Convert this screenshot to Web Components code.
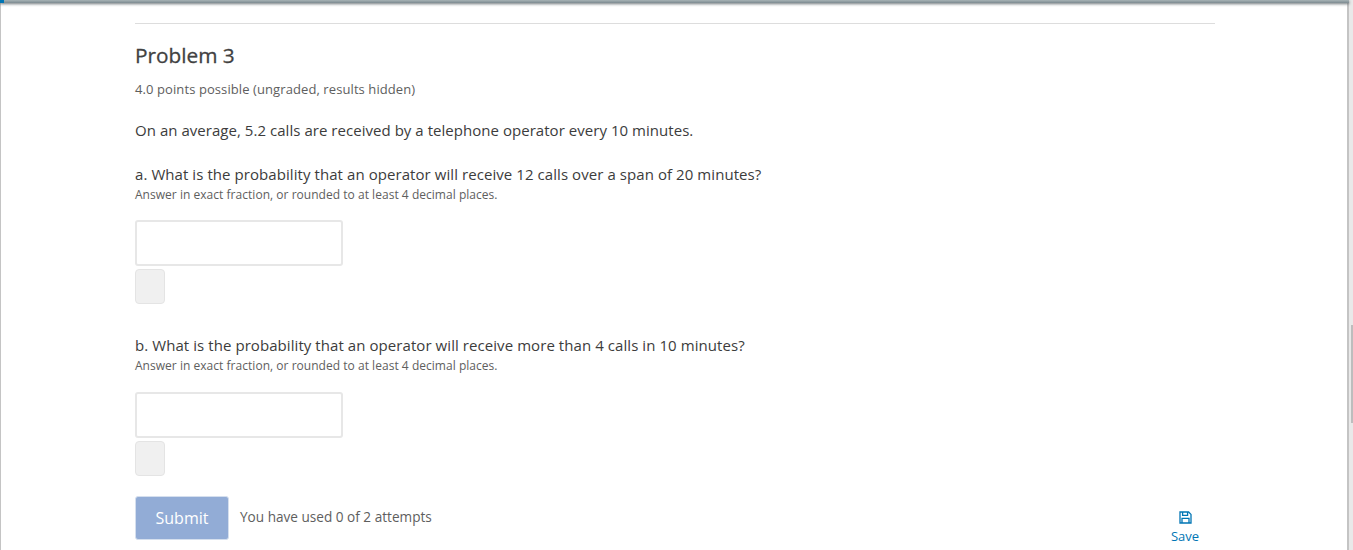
<!DOCTYPE html>
<html>
<head>
<meta charset="utf-8">
<title>Problem 3</title>
<style>
  html, body { margin: 0; height: 100%; overflow: hidden; background: #efefef; }
  body { font-family: "Open Sans", "Liberation Sans", sans-serif; }
</style>
</head>
<body>
<page-frame>
  <problem-block heading="Problem 3" points="4.0 points possible (ungraded, results hidden)">
    <p slot="intro">On an average, 5.2 calls are received by a telephone operator every 10 minutes.</p>
    <answer-part question="a. What is the probability that an operator will receive 12 calls over a span of 20 minutes?" hint="Answer in exact fraction, or rounded to at least 4 decimal places."></answer-part>
    <answer-part class="second" question="b. What is the probability that an operator will receive more than 4 calls in 10 minutes?" hint="Answer in exact fraction, or rounded to at least 4 decimal places."></answer-part>
    <submit-bar slot="actions" attempts="You have used 0 of 2 attempts"></submit-bar>
  </problem-block>
</page-frame>

<script>
class PageFrame extends HTMLElement {
  constructor() {
    super();
    this.attachShadow({ mode: 'open' }).innerHTML = `
      <style>
        :host {
          display: flex;
          width: 1353px;
          height: 550px;
          overflow: hidden;
          background: #e9e9e9;
        }
        .sheet {
          flex: 1;
          min-width: 0;
          display: flex;
          flex-direction: column;
          background: #fff;
          border-left: 1px solid #c4c4c4;
          border-right: 2px solid #c4c4c4;
        }
        .topbar {
          flex: none;
          height: 3px;
          background: linear-gradient(#a7b3b6, #7c8a90);
          box-shadow: 0 1px 3px rgba(70, 80, 85, .8);
          margin-left: -1px;
          margin-right: -2px;
          display: flex;
        }
        .topbar i { display: block; width: 4px; background: #0075b4; }
        .content { flex: 1; padding: 20px 132px 0 134px; }
        .rail {
          flex: none;
          width: 4px;
          display: flex;
          justify-content: flex-end;
          padding-top: 325px;
        }
        .rail i { display: block; width: 2px; height: 98px; background: #bdbdbd; }
      </style>
      <div class="sheet">
        <div class="topbar"><i></i></div>
        <div class="content"><slot></slot></div>
      </div>
      <div class="rail"><i></i></div>`;
  }
}

class ProblemBlock extends HTMLElement {
  constructor() {
    super();
    this.attachShadow({ mode: 'open' }).innerHTML = `
      <style>
        :host { display: block; border-top: 1px solid #ddd; color: #414141; }
        h3 {
          margin: 0;
          padding-top: 16px;
          font-size: 20.8px;
          line-height: 30px;
          font-weight: 500;
          -webkit-text-stroke: .3px #414141;
          color: #414141;
        }
        .points {
          margin-top: 10px;
          font-size: 13px;
          letter-spacing: .09px;
          line-height: 18px;
          color: #5e5e5e;
        }
        .intro { display: block; margin-top: 21px; }
        ::slotted(p) {
          margin: 0;
          font-size: 15px;
          letter-spacing: .04px;
          line-height: 22px;
          color: #3c3c3c;
        }
      </style>
      <h3></h3>
      <div class="points"></div>
      <div class="intro"><slot name="intro"></slot></div>
      <slot></slot>
      <slot name="actions"></slot>`;
    this.shadowRoot.querySelector('h3').textContent = this.getAttribute('heading');
    this.shadowRoot.querySelector('.points').textContent = this.getAttribute('points');
  }
}

class AnswerPart extends HTMLElement {
  constructor() {
    super();
    this.attachShadow({ mode: 'open' }).innerHTML = `
      <style>
        :host { display: block; padding-top: 22px; }
        :host(.second) { padding-top: 30px; }
        .question { font-size: 15px; letter-spacing: .07px; line-height: 22px; color: #3c3c3c; }
        .hint { margin-top: 1px; font-size: 12px; letter-spacing: .03px; line-height: 18px; color: #5e5e5e; }
        .field {
          box-sizing: border-box;
          display: block;
          width: 208px;
          height: 46px;
          margin-top: 16px;
          border: 2px solid #e7e7e7;
          border-radius: 3px;
          background: #fff;
        }
        :host(.second) .field { margin-top: 17px; }
        .status {
          box-sizing: border-box;
          width: 30px;
          height: 35px;
          margin-top: 3px;
          border: 1px solid #e4e4e4;
          border-radius: 4px;
          background: #f0f0f0;
        }
      </style>
      <div class="question"></div>
      <div class="hint"></div>
      <div class="field"></div>
      <div class="status"></div>`;
    this.shadowRoot.querySelector('.question').textContent = this.getAttribute('question');
    this.shadowRoot.querySelector('.hint').textContent = this.getAttribute('hint');
  }
}

class SubmitBar extends HTMLElement {
  constructor() {
    super();
    this.attachShadow({ mode: 'open' }).innerHTML = `
      <style>
        :host { display: flex; align-items: flex-start; height: 44px; margin-top: 20px; }
        .submit {
          box-sizing: border-box;
          width: 94px;
          height: 44px;
          padding-bottom: 1px;
          border: 1px solid #d5dfee;
          border-radius: 3px;
          background: #92acd6;
          color: #fff;
          font: 500 16px/22px "Open Sans", "Liberation Sans", sans-serif;
          display: flex;
          align-items: center;
          justify-content: center;
        }
        .attempts { margin: 12px 0 0 11px; font-size: 13.6px; line-height: 18px; color: #5e5e5e; }
        .save {
          margin-left: auto;
          width: 60px;
          display: flex;
          flex-direction: column;
          align-items: center;
          color: #0075b4;
          font-size: 13px;
          line-height: 18px;
          padding-top: 15px;
        }
        svg { display: block; margin-bottom: 3px; }
      </style>
      <div class="submit">Submit</div>
      <div class="attempts"></div>
      <div class="save">
        <svg width="13" height="13" viewBox="0 0 13 13" fill="none" stroke="#0075b4" stroke-width="1.3">
          <path d="M1 1h8.6L12 3.4V12H1z"/>
          <path d="M3.6 1v3.4h5V1"/>
          <path d="M3 12V7.4h7V12"/>
        </svg>
        <span>Save</span>
      </div>`;
    this.shadowRoot.querySelector('.attempts').textContent = this.getAttribute('attempts');
  }
}

customElements.define('page-frame', PageFrame);
customElements.define('problem-block', ProblemBlock);
customElements.define('answer-part', AnswerPart);
customElements.define('submit-bar', SubmitBar);
</script>
</body>
</html>
